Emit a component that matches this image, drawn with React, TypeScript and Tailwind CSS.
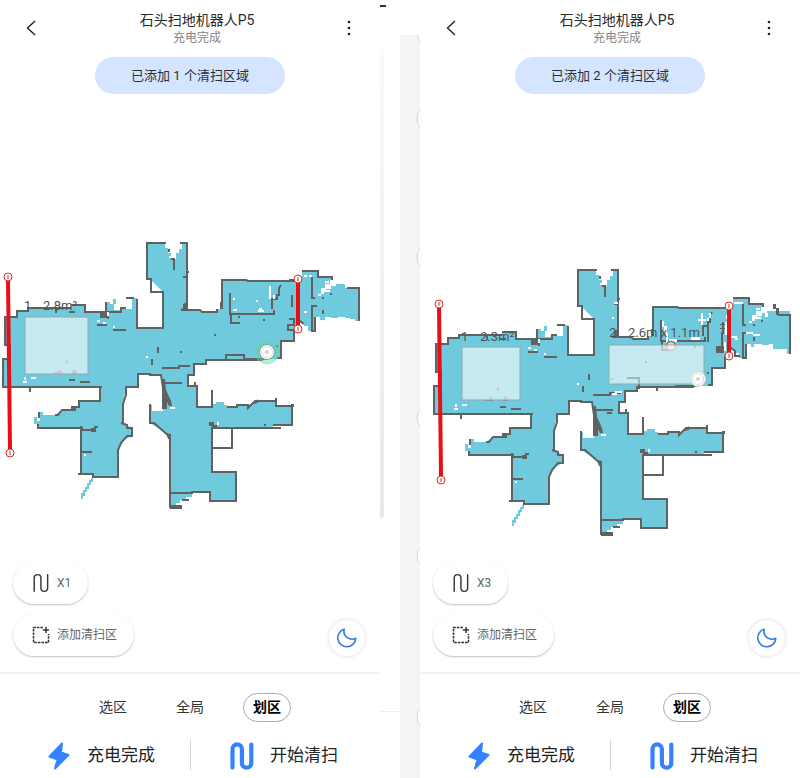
import type { ReactNode } from "react";
import clsx from "clsx";

const FLOOR =
  "M147 243H165V248H168V253H171V259H176V253H179V249H182V243H187V310H200V312H217V309H222V280H246V281H295V277H302V271H318V277H332V280H330V284H325V288H321V292H326V289H331V286H336V284H345V288H359V321H355V319H350V318H345V317H338V318H331V317H325V320H320V317H316V330H311V331H308V326H304V323H299V329H294V341H281V358H277V359H206V364H194V375H188V386H197V406H213V404H216V402H224V405H227V406H248L255 401H276V406H292V425H273V428H212V472H236V501H210V492H192V497H186V500H180V503H176V508H171V436L150 423V405H152V411H163V388L161 375H150V374H138V387H126L123 404V423L132 428V436L124 440L118 450V477H93V474H81V428H38V424H34V417H37V421H40V412H43V415H55L62 410H72V407H79V401H100V387H3V359H10V345H5V317H17V311H28V308H71V305H85V312H106V302H110V304H113V299H116V304H114V310H121V308H126V309H132V298H137V328H163V292L151 280H147Z";

const WALLS =
  "M166 243H147V279H151V292H163V328H137V299M134 298H126M180 243H187V310H181M187 310H200L202 312H217V309M222 308V280H246L248 281H295M230 293V314H274V310M231 314V323H240M272 309V299H277V295H279V288L281 285M302 271H318V277H332V280M312 277V298H315M312 331V306H317M311 331H315V317M347 288H359V321M294 329V341H281V358H277M268 359H244M263 360H206V364H194V375H188V386H197V407H212V390M227 407H237V405H248V408L255 401H276V406H293M292 406V425H273M281 428H212V472H236V501H210V492H192V493H171M232 429V448H212M195 386V382M150 404V423H154L170 437V508M163 388L161 375H150V374H138V387H126V395L123 404V423M121 423L127 425V428H132V436H127L121 443L118 450V477H93V474H78M81 474V426M82 452H92M82 430H92M38 424V428H83M39 418V412M55 415H58L62 410H72V407H79V401H100V387M102 387H3V359H10V345H5V317H17V311H28V308H71M71 305H85V312H121V308H126M106 312V302M30 387V392M163 383H182M162 368H179V366H190M174 259V270M171 259H175M169 249V252";

const BLOCKS =
  "M180 310L183 308V304L187 302V311ZM220 309V302H223V309ZM162 379H165L166 390L171 401L172 406H169L167 402V409H162ZM170 505H182V509H170ZM209 422H214V425H217V428H212V426H209ZM91 428H94V426H98V428H96V432H91ZM166 433L171 434V440L168 439ZM253 404L258 399V403ZM73 407H76V411H72ZM107 316L109 314V319H107Z";

const SPECKS_DARK = [
  [157, 347, 2, 6], [151, 359, 2, 6], [113, 329, 13, 2], [97, 324, 10, 2], [100, 313, 7, 5],
  [180, 351, 2, 2], [276, 345, 2, 2], [214, 334, 2, 2], [238, 316, 2, 2], [187, 271, 2, 2],
  [69, 379, 6, 2], [80, 381, 10, 2], [69, 311, 6, 2], [55, 309, 2, 4], [182, 499, 7, 2],
  [263, 319, 2, 2], [264, 424, 2, 2], [322, 297, 2, 2], [330, 293, 2, 2], [322, 310, 2, 4],
  [258, 400, 2, 2], [275, 398, 2, 3], [291, 404, 3, 3], [183, 276, 3, 2], [291, 295, 2, 12],
];

const SPECKS_WHITE = [
  [173, 255, 2, 3], [169, 256, 4, 2], [97, 320, 3, 2], [103, 322, 3, 2], [113, 326, 2, 2],
  [146, 356, 2, 2], [84, 454, 2, 2], [23, 381, 4, 2], [31, 377, 5, 2], [24, 377, 2, 3],
  [304, 275, 3, 2], [309, 275, 3, 2], [325, 281, 4, 2], [304, 311, 3, 2], [321, 292, 3, 2],
  [217, 422, 2, 3], [318, 294, 3, 2], [325, 290, 5, 2], [107, 312, 2, 4], [170, 407, 5, 2],
];

const LEFT_WHITE = [
  [269, 286, 2, 13], [273, 295, 2, 4], [233, 298, 2, 2], [233, 309, 4, 2], [256, 300, 2, 2],
  [259, 308, 3, 4], [258, 310, 6, 2],
];

const RIGHT_WHITE = [
  [231, 294, 2, 6], [233, 299, 3, 7], [235, 306, 2, 12], [238, 312, 8, 3], [270, 286, 2, 12],
  [267, 292, 8, 2], [278, 286, 2, 5], [276, 291, 2, 3], [260, 310, 9, 3], [183, 275, 4, 2],
  [181, 290, 2, 2], [294, 295, 2, 13], [295, 288, 3, 4], [303, 275, 8, 2], [300, 309, 6, 2],
  [315, 305, 7, 2], [322, 307, 7, 2], [323, 317, 2, 5], [184, 364, 7, 2], [181, 366, 5, 2],
  [293, 315, 2, 9], [334, 286, 3, 4],
];

const RIGHT_DARK = [
  [289, 297, 8, 1], [289, 301, 9, 1], [285, 319, 8, 7], [290, 305, 2, 16], [342, 277, 3, 5],
  [345, 281, 3, 7], [276, 297, 2, 18], [176, 385, 5, 2], [207, 355, 2, 7],
];

function Specks({ cells, fill }: { cells: number[][]; fill: string }) {
  return (
    <g fill={fill}>
      {cells.map(([x, y, w, h], i) => (
        <rect key={i} x={x} y={y} width={w} height={h} />
      ))}
    </g>
  );
}

function Pin({ x, y }: { x: number; y: number }) {
  return (
    <g stroke="#d92b2b">
      <circle cx={x} cy={y} r="4" fill="#fff" />
      <path d={`M${x} ${y - 2}v4`} />
    </g>
  );
}

function Zone({ x, y, w, h }: { x: number; y: number; w: number; h: number }) {
  return <rect x={x} y={y} width={w} height={h} fill="#fff" fillOpacity=".6" stroke="#8fa9b0" />;
}

function Robot({ x, y, docked }: { x: number; y: number; docked?: boolean }) {
  return (
    <g>
      {docked && <circle cx={x} cy={y} r="12.5" fill="#5fd8a4" fillOpacity=".45" />}
      <circle cx={x} cy={y} r="7.5" fill="#fff" stroke={docked ? "#8f9794" : "#ccd5d5"} />
      <circle cx={x} cy={y} r="5.5" fill="#fff" stroke="#dcdcdc" />
      <circle cx={x} cy={y} r="1.3" fill="none" stroke="#bbb" />
    </g>
  );
}

function FloorMap({ dx, dy, variant, children }: { dx: number; dy: number; variant: 1 | 2; children: ReactNode }) {
  return (
    <svg viewBox="0 94 380 468" className="block w-full" role="img" aria-label="地图">
      <g transform={`translate(${dx} ${dy})`}>
        <path d={FLOOR} fill="#6fcadd" />
        {variant === 2 && <path d="M342 284H359V327H356V322H342Z" fill="#6fcadd" />}
        <path d="M92 478V481H90V484H88V488H86V491H84V495H82V499M81 494H84" fill="none" stroke="#6fcadd" strokeWidth="2" />
        <path d="M5 317H9V345H5Z" fill="#7897a1" />
        <path d={WALLS} fill="none" stroke="#606262" strokeWidth="2" />
        {variant === 1 && (
          <path d="M226 359V355H244V360M289 280H294M289 319H294V325H288V330H294M296 318L304 324" fill="none" stroke="#606262" strokeWidth="2" />
        )}
        {variant === 2 && (
          <path d="M359 288V327M296 318L304 324V329H309M331 279H333M226 360V364" fill="none" stroke="#606262" strokeWidth="2" />
        )}
        <path d={BLOCKS} fill="#606262" />
        <Specks cells={SPECKS_DARK} fill="#606262" />
        <Specks cells={SPECKS_WHITE} fill="#fff" />
        {variant === 2 && <Specks cells={RIGHT_DARK} fill="#606262" />}
        <Specks cells={variant === 1 ? LEFT_WHITE : RIGHT_WHITE} fill="#fff" />
        <path d="M54 372h4v-2h3v2h2v2h-9zM72 372l2-3 3 3v2h-5zM64 361h3v-2h1v5h-2v-2h-2z" fill="#7e7e7e" />
      </g>
      {children}
      <g transform={`translate(${dx} ${dy})`}>
        <path d="M8 280L10 449M298 283V325" stroke="#ea0f16" strokeWidth="4" />
        <Pin x={8} y={277} />
        <Pin x={10} y={453} />
        <Pin x={298} y={279} />
        <Pin x={298} y={329} />
      </g>
    </svg>
  );
}

function SnakeIcon({ className, strokeWidth }: { className: string; strokeWidth: number }) {
  return (
    <svg viewBox="0 0 24 28" fill="none" stroke="currentColor" strokeWidth={strokeWidth} strokeLinecap="round" className={className}>
      <path d="M2.5 25.5V7a4.7 4.7 0 0 1 9.4 0v14a4.7 4.7 0 0 0 9.4 0V2.5" />
    </svg>
  );
}

const TABS = ["选区", "全局", "划区"];

function Phone({ zones, passes, children }: { zones: number; passes: number; children: ReactNode }) {
  return (
    <section className="flex min-w-0 flex-col">
      <header className="flex items-center justify-between px-[21px] pt-[10px]">
        <button aria-label="返回" className="flex w-5 justify-center">
          <svg viewBox="0 0 10 16" className="h-4 w-[10px]" fill="none" stroke="#222" strokeWidth="1.4">
            <path d="M9 1L1.5 8L9 15" />
          </svg>
        </button>
        <div className="pl-[14px] text-center">
          <h1 className="text-[14px] leading-5 text-[#2b2b2b]">石头扫地机器人P5</h1>
          <p className="text-[12px] leading-4 text-[#858585]">充电完成</p>
        </div>
        <button aria-label="更多" className="flex w-5 justify-center">
          <svg viewBox="0 0 4 16" className="h-4 w-1" fill="#222">
            <circle cx="2" cy="2" r="1.3" />
            <circle cx="2" cy="8" r="1.3" />
            <circle cx="2" cy="14" r="1.3" />
          </svg>
        </button>
      </header>
      <p className="mx-auto mt-[11px] flex h-[37px] w-1/2 items-center justify-center rounded-full bg-[#d6e5ff] text-[13px] text-[#27303c]">
        已添加 {zones} 个清扫区域
      </p>

      {children}

      <div className="flex items-end justify-between border-b-2 border-[#f3f3f3] pb-4 pl-[13px] pr-[15px]">
        <div className="flex flex-col items-start gap-[10px]">
          <button className="flex h-[42px] items-center gap-[7px] rounded-full bg-white pl-[19px] pr-[17px] text-[12px] text-[#666] shadow-[0_1px_2px_rgba(0,0,0,0.25)]">
            <SnakeIcon className="h-5 w-[18px] text-[#333]" strokeWidth={2} />
            X{passes}
          </button>
          <button className="flex h-[42px] items-center gap-[7px] rounded-full bg-white pl-[19px] pr-[17px] text-[12px] text-[#666] shadow-[0_1px_2px_rgba(0,0,0,0.25)]">
            <svg viewBox="0 0 18 18" className="h-[18px] w-[18px]" fill="none" stroke="#333" strokeWidth="1.5">
              <path d="M11 1.5H1.5V16.5H16.5V8" strokeDasharray="2.6 1" />
              <path d="M14 1v6M11 4h6" />
            </svg>
            添加清扫区
          </button>
        </div>
        <button aria-label="勿扰模式" className="flex size-9 items-center justify-center rounded-full bg-white shadow-[0_0_4px_rgba(0,0,0,0.16)]">
          <svg viewBox="0 0 20 20" className="size-5" fill="none" stroke="#3478e5" strokeWidth="1.6" strokeLinejoin="round">
            <path d="M7.2 1.2A9 9 0 1 0 18.8 10.3C13 13 5.5 9 7.2 1.2Z" />
          </svg>
        </button>
      </div>

      <nav className="flex justify-center gap-[29px] pt-[19px]">
        {TABS.map((tab) => (
          <button
            key={tab}
            className={clsx(
              "h-[29px] w-12 rounded-full border text-[14px]",
              tab === "划区" ? "border-[#aaa] font-bold text-black" : "border-transparent text-[#333]",
            )}
          >
            {tab}
          </button>
        ))}
      </nav>

      <footer className="mt-[18px] grid grid-cols-2 pb-2 text-[17px] text-[#222]">
        <button className="flex h-[30px] items-center gap-[17px] pl-12 pt-[2px]">
          <svg viewBox="0 0 22 28" className="h-7 w-[22px]" fill="#3482ff" stroke="#3482ff" strokeWidth="2" strokeLinejoin="round">
            <path d="M14 1.5L1.5 14.5L9.5 17.5L7 26.5L20.5 13L13 10.5Z" />
          </svg>
          充电完成
        </button>
        <button className="flex h-[30px] items-center gap-4 border-l border-[#d5d5d5] pl-[39px] pt-[2px]">
          <SnakeIcon className="h-7 w-6 text-[#3482ff]" strokeWidth={4.2} />
          开始清扫
        </button>
      </footer>
    </section>
  );
}

const ARCS = [-2, 84, 222, 383, 521, 682];

export default function App() {
  return (
    <main className="grid min-h-screen grid-cols-[1fr_20px_20px_1fr] bg-white font-[Roboto,'Noto_Sans_CJK_SC',sans-serif]">
      <Phone zones={1} passes={1}>
        <FloorMap dx={0} dy={0} variant={1}>
          <Zone x={25} y={317} w={63} h={57} />
          <g fill="#4b5659" fontSize="13">
            <text x="24" y="310">1</text>
            <text x="43" y="310">2.8m²</text>
          </g>
          <Robot x={267} y={352} docked />
        </FloorMap>
      </Phone>

      <div className="flex flex-col pt-[5px]">
        <div className="h-[2px] w-[6px] bg-[#333]" />
        <div className="mt-[41px] h-[470px] w-1 rounded-r bg-linear-to-b from-[#fafafa] to-[#e8e8e8]" />
        <div className="mt-[193px] h-px bg-[#eee]" />
      </div>

      <div className="mt-[35px] bg-[#f4f4f4]">
        <svg className="h-[743px] w-5" fill="#fff" stroke="#d4d4d4">
          {ARCS.map((y) => (
            <circle key={y} cx="31" cy={y} r="14" />
          ))}
        </svg>
      </div>

      <Phone zones={2} passes={3}>
        <FloorMap dx={11} dy={27} variant={2}>
          <circle cx="251" cy="346" r="4.5" fill="#ddd" stroke="#888" strokeWidth="2" />
          <Zone x={42} y={347} w={58} h={53} />
          <Zone x={189} y={345} w={95} h={39} />
          <path d="M207 378h12v6" fill="none" stroke="#a3b5b9" strokeWidth="2" />
          <g fill="#4b5659" fontSize="13">
            <text x="41" y="341">1</text>
            <text x="60" y="341">2.3m²</text>
            <text x="189" y="337">2</text>
            <text x="208" y="337">2.6m x 1.1m</text>
          </g>
          <Robot x={278} y={379} />
        </FloorMap>
      </Phone>
    </main>
  );
}
